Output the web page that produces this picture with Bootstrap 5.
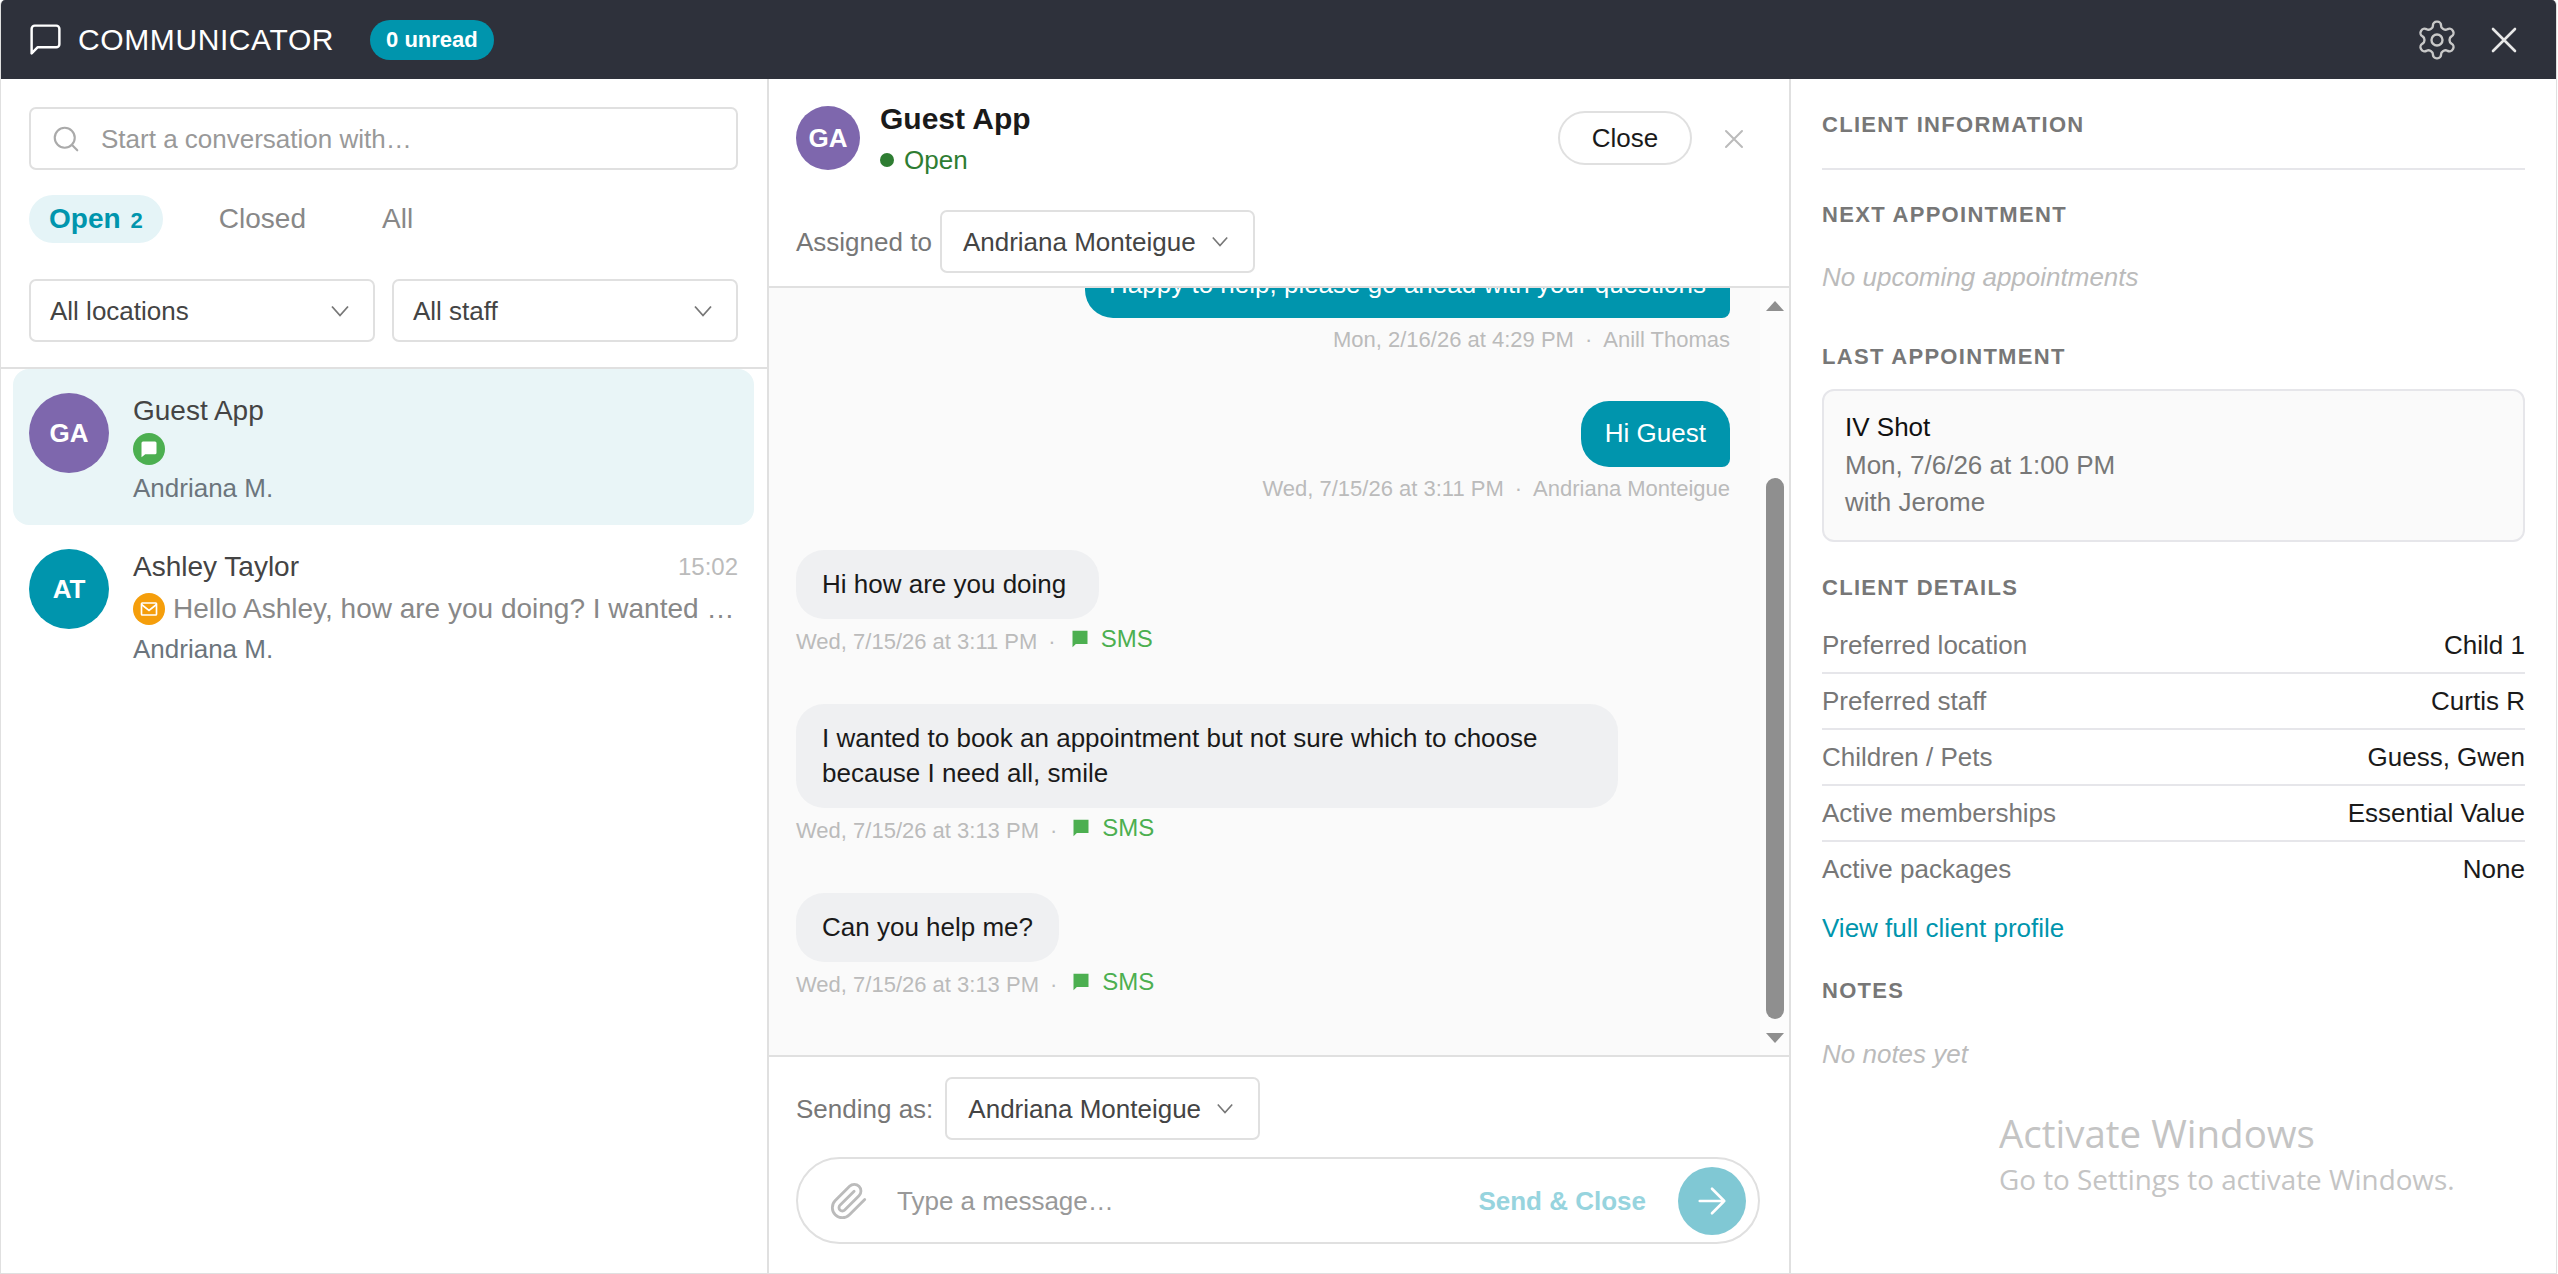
<!DOCTYPE html>
<html lang="en">
<head>
    <meta charset="UTF-8">
    <meta name="viewport" content="width=device-width, initial-scale=1.0">
    <title>Communicator</title>
    <link rel="stylesheet" href="https://cdn.jsdelivr.net/npm/bootstrap@5.3.0/dist/css/bootstrap.min.css">
    <style>
        html, body { height: 100%; }
        body {
            margin: 0;
            background: #fff;
            color: #1a1a1a;
            overflow: hidden;
            font-family: "Liberation Sans", Arial, sans-serif;
            font-size: 26px;
            line-height: 34px;
        }
        svg { display: block; flex-shrink: 0; }

        .shell {
            position: relative;
            width: 2557px;
            height: 1274px;
            border: solid #e0e0e0;
            border-width: 0 1px 1px 1px;
            border-radius: 5px 5px 0 0;
            overflow: hidden;
        }
        .top-bar { height: 79px; background: #2e313b; color: #fff; padding: 0 39px 0 26px; }
        .top-title { font-size: 30px; line-height: 40px; margin-left: 14px; letter-spacing: .6px; }
        .unread-pill {
            background: #0095ad; color: #fff; font-weight: 700; font-size: 22px; line-height: 40px;
            height: 40px; padding: 0 16px; border-radius: 20px; margin-left: 36px;
        }
        .top-actions { gap: 32px; }
        .panes { height: 1194px; }

        /* left pane */
        .left-pane { width: 768px; border-right: 2px solid #e0e0e0; flex-shrink: 0; }
        .left-head { padding: 28px 29px 25px 28px; border-bottom: 2px solid #e0e0e0; }
        .search-box {
            height: 63px; border: 2px solid #e0e0e0; border-radius: 7px; padding: 0 14px 0 20px; gap: 20px;
        }
        .search-box input, .composer input {
            border: 0; outline: 0; padding: 0; background: transparent; box-shadow: none;
            font-size: 26px; line-height: 34px; color: #333; border-radius: 0; min-width: 0;
        }
        .search-box input::placeholder { color: #999; opacity: 1; }
        .composer input::placeholder { color: #999; opacity: 1; }
        .conv-tabs { margin-top: 25px; gap: 56px; }
        .conv-tabs .nav-link {
            height: 48px; padding: 0; color: #888; font-size: 28px; line-height: 48px;
        }
        .conv-tabs .nav-link.active {
            background: #e5f4f7; color: #0095ad; font-weight: 700; border-radius: 24px; padding: 0 20px;
        }
        .conv-tabs .nav-item:last-child { margin-left: 20px; }
        .conv-tabs .tab-count { font-size: 22px; margin-left: 10px; }
        .pick-btn {
            height: 63px; border: 2px solid #e0e0e0; border-radius: 7px; background: #fff; color: #444;
            font-size: 26px; line-height: 34px; padding: 0 19px;
        }
        .filter-row { margin-top: 36px; gap: 17px; }
        .filter-row .pick-btn { flex: 1 1 0; }

        .conv-list { padding: 0 13px 0 12px; }
        .conv-row { border: 0 !important; padding: 24px 16px 20px; gap: 24px; background: transparent; color: inherit; border-radius: 16px !important; }
        .conv-row.picked { background: #e9f5f7; }
        .conv-row.next-row { height: 190px; }
        .face {
            border-radius: 50%; color: #fff; font-weight: 700; flex-shrink: 0;
        }
        .face-lg { width: 80px; height: 80px; font-size: 26px; }
        .face-md { width: 64px; height: 64px; font-size: 26px; margin-top: 5px; }
        .face-purple { background: #7e67ad; }
        .face-teal { background: #0095ad; }
        .conv-name { color: #444; font-size: 28px; line-height: 36px; }
        .conv-time { color: #bbb; font-size: 24px; line-height: 36px; }
        .conv-line { height: 40px; gap: 8px; color: #888; font-size: 28px; }
        .conv-staff { color: #6c757d; margin-top: 2px; }
        .next-row .conv-line { margin-top: 4px; }
        .next-row .conv-staff { margin-top: 3px; }
        .kind-dot { width: 32px; height: 32px; border-radius: 50%; flex-shrink: 0; }
        .kind-sms { background: #4caf50; }
        .kind-mail { background: #f59e0b; }

        /* middle pane */
        .mid-pane { width: 1022px; border-right: 2px solid #e0e0e0; flex-shrink: 0; }
        .mid-head { padding: 22px 45px 13px 27px; border-bottom: 2px solid #e0e0e0; }
        .mid-title { font-size: 30px; font-weight: 700; line-height: 36px; }
        .mid-status { color: #2e7d32; margin-top: 6px; gap: 10px; }
        .status-dot { width: 14px; height: 14px; border-radius: 50%; background: #2e7d32; }
        .close-chat {
            height: 54px; width: 134px; border: 2px solid #e0e0e0; border-radius: 27px; background: #fff;
            font-size: 26px; line-height: 34px; color: #1a1a1a; padding: 0; margin-top: 10px;
        }
        .assign-row { margin-top: 33px; gap: 8px; color: #777; }
        .assign-row .pick-btn { gap: 15px; padding: 0 24px 0 21px; }

        .chat-body { height: 767px; background: #fafafa; min-height: 0; }
        .chat-scroll { padding: 0 30px 55px 27px; overflow: hidden; }
        .bubble { padding: 17px 26px; line-height: 35px; border-radius: 28px; }
        .bubble-in { background: #eff0f2; color: #1a1a1a; max-width: 822px; align-self: flex-start; }
        .bubble-out {
            background: #0095ad; color: #fff; align-self: flex-end; padding: 15px 24px 16px;
            border-bottom-right-radius: 8px;
        }
        .stamp { font-size: 22px; line-height: 30px; color: #bbb; }
        .stamp-in { margin-top: 8px; margin-bottom: 47px; }
        .stamp-out { margin-top: 7px; margin-bottom: 46px; text-align: right; }
        .chat-scroll .stamp-in:last-child { margin-bottom: 0; }
        .stamp .sep { margin: 0 11px; }
        .sms-tag { color: #4caf50; font-size: 24px; gap: 11px; margin-left: 3px; position: relative; top: -3px; }
        .fake-scroll { width: 29px; background: #fcfcfc; padding: 13px 5px 12px 5px; flex-shrink: 0; }
        .fake-thumb { width: 18px; height: 541px; border-radius: 9px; background: #8f8f8f; margin-top: 167px; margin-bottom: 14px; }

        .mid-foot { border-top: 2px solid #e0e0e0; padding: 20px 29px 0 27px; }
        .send-row { gap: 12px; color: #777; }
        .send-row .pick-btn { gap: 15px; padding: 0 24px 0 21px; }
        .composer {
            height: 87px; margin-top: 17px; border: 2px solid #e0e0e0; border-radius: 44px;
            padding: 0 12px 0 31px; background: #fff;
        }
        .composer-input { margin-left: 28px; }
        .send-label { color: #97d4de; font-weight: 700; flex-shrink: 0; }
        .send-round { width: 68px; height: 68px; border-radius: 50%; background: #80c8d4; margin-left: 32px; flex-shrink: 0; }

        /* right pane */
        .info-pane { padding: 33px 31px 0 31px; min-width: 0; }
        .info-head { font-size: 22px; line-height: 26px; font-weight: 700; letter-spacing: 1.3px; color: #777; }
        .info-rule { border-bottom: 2px solid #e6e6ea; padding-bottom: 30px; }
        .info-empty { color: #bbb; font-style: italic; }
        .appt-box {
            margin-top: 19px; padding: 18px 21px; background: #fafafa; border: 2px solid #e6e6ea; border-radius: 12px;
            line-height: 37.5px; color: #777;
        }
        .appt-box .appt-name { color: #111; }
        .detail-row { height: 56px; border-bottom: 2px solid #e6e6ea; color: #777; }
        .detail-row:last-child { border-bottom: 0; height: 54px; }
        .detail-row span:last-child { color: #1a1a1a; }
        .profile-link { color: #0095ad; text-decoration: none; display: block; margin-top: 15px; }

        .activate-mark {
            position: absolute; left: 1998px; top: 1107px; color: #c4c4c4;
            font-family: "Open Sans", sans-serif; pointer-events: none;
        }
        .activate-mark .mark-a { font-size: 38.5px; line-height: 52px; }
        .activate-mark .mark-b { font-size: 27.8px; line-height: 36px; margin-top: 2px; }
    </style>
</head>
<body>

<div class="shell d-flex flex-column">
    <!-- top bar -->
    <div class="top-bar d-flex align-items-center">
        <svg width="37" height="37" viewBox="0 0 24 24" fill="none" stroke="#fff" stroke-width="1.6" stroke-linejoin="round"><path d="M21 15a2 2 0 0 1-2 2H7l-4 4V5a2 2 0 0 1 2-2h14a2 2 0 0 1 2 2z"/></svg>
        <div class="top-title">COMMUNICATOR</div>
        <div class="unread-pill">0 unread</div>
        <div class="top-actions ms-auto d-flex align-items-center">
            <svg width="44" height="44" viewBox="0 0 24 24" fill="none" stroke="#c8c8c8" stroke-width="1.3" stroke-linecap="round" stroke-linejoin="round"><path d="M12.22 2h-.44a2 2 0 0 0-2 2v.18a2 2 0 0 1-1 1.73l-.43.25a2 2 0 0 1-2 0l-.15-.08a2 2 0 0 0-2.73.73l-.22.38a2 2 0 0 0 .73 2.73l.15.1a2 2 0 0 1 1 1.72v.51a2 2 0 0 1-1 1.74l-.15.09a2 2 0 0 0-.73 2.73l.22.38a2 2 0 0 0 2.73.73l.15-.08a2 2 0 0 1 2 0l.43.25a2 2 0 0 1 1 1.73V20a2 2 0 0 0 2 2h.44a2 2 0 0 0 2-2v-.18a2 2 0 0 1 1-1.73l.43-.25a2 2 0 0 1 2 0l.15.08a2 2 0 0 0 2.73-.73l.22-.39a2 2 0 0 0-.73-2.73l-.15-.08a2 2 0 0 1-1-1.74v-.5a2 2 0 0 1 1-1.74l.15-.09a2 2 0 0 0 .73-2.73l-.22-.38a2 2 0 0 0-2.73-.73l-.15.08a2 2 0 0 1-2 0l-.43-.25a2 2 0 0 1-1-1.73V4a2 2 0 0 0-2-2z"/><circle cx="12" cy="12" r="3"/></svg>
            <svg width="26" height="26" viewBox="0 0 26 26" fill="none" stroke="#e8e8e8" stroke-width="2.6" stroke-linecap="round"><path d="M2 2l22 22M24 2L2 24"/></svg>
        </div>
    </div>

    <div class="panes d-flex">
        <!-- conversation list -->
        <div class="left-pane d-flex flex-column">
            <div class="left-head">
                <div class="search-box d-flex align-items-center">
                    <svg width="30" height="30" viewBox="0 0 24 24" fill="none" stroke="#aaa" stroke-width="1.7" stroke-linecap="round"><circle cx="11" cy="11" r="8"/><path d="M21 21l-4.35-4.35"/></svg>
                    <input class="form-control" type="text" placeholder="Start a conversation with…">
                </div>
                <ul class="nav conv-tabs">
                    <li class="nav-item"><a class="nav-link active" href="#">Open<span class="tab-count">2</span></a></li>
                    <li class="nav-item"><a class="nav-link" href="#">Closed</a></li>
                    <li class="nav-item"><a class="nav-link" href="#">All</a></li>
                </ul>
                <div class="filter-row d-flex">
                    <button class="btn pick-btn d-flex align-items-center justify-content-between">All locations
                        <svg class="me-1" width="20" height="12" viewBox="0 0 20 12" fill="none" stroke="#777" stroke-width="1.8"><path d="M2 1.5l8 9 8-9"/></svg></button>
                    <button class="btn pick-btn d-flex align-items-center justify-content-between">All staff
                        <svg class="me-1" width="20" height="12" viewBox="0 0 20 12" fill="none" stroke="#777" stroke-width="1.8"><path d="M2 1.5l8 9 8-9"/></svg></button>
                </div>
            </div>
            <div class="list-group conv-list">
                <a href="#" class="list-group-item conv-row picked d-flex text-decoration-none">
                    <div class="face face-lg face-purple d-flex align-items-center justify-content-center">GA</div>
                    <div class="flex-fill" style="min-width:0">
                        <div class="conv-name">Guest App</div>
                        <div class="conv-line d-flex align-items-center">
                            <div class="kind-dot kind-sms d-flex align-items-center justify-content-center">
                                <svg width="18" height="18" viewBox="0 0 24 24" fill="#fff"><path d="M2 4a2 2 0 0 1 2-2h16a2 2 0 0 1 2 2v13a2 2 0 0 1-2 2H7l-5 4z"/></svg>
                            </div>
                        </div>
                        <div class="conv-staff">Andriana M.</div>
                    </div>
                </a>
                <a href="#" class="list-group-item conv-row next-row d-flex text-decoration-none">
                    <div class="face face-lg face-teal d-flex align-items-center justify-content-center">AT</div>
                    <div class="flex-fill" style="min-width:0">
                        <div class="d-flex justify-content-between">
                            <div class="conv-name">Ashley Taylor</div>
                            <div class="conv-time">15:02</div>
                        </div>
                        <div class="conv-line d-flex align-items-center">
                            <div class="kind-dot kind-mail d-flex align-items-center justify-content-center">
                                <svg width="18" height="18" viewBox="0 0 24 24" fill="none" stroke="#fff" stroke-width="2.2"><rect x="2" y="4" width="20" height="16" rx="1"/><path d="M2 6l10 8 10-8"/></svg>
                            </div>
                            <div class="text-truncate">Hello Ashley, how are you doing? I wanted to ask about my booking</div>
                        </div>
                        <div class="conv-staff">Andriana M.</div>
                    </div>
                </a>
            </div>
        </div>

        <!-- chat -->
        <div class="mid-pane d-flex flex-column">
            <div class="mid-head">
                <div class="d-flex align-items-start">
                    <div class="face face-md face-purple d-flex align-items-center justify-content-center">GA</div>
                    <div style="margin-left:20px">
                        <div class="mid-title">Guest App</div>
                        <div class="mid-status d-flex align-items-center"><span class="status-dot"></span>Open</div>
                    </div>
                    <button class="btn close-chat ms-auto">Close</button>
                    <svg style="margin:28px 0 0 32px" width="20" height="20" viewBox="0 0 20 20" fill="none" stroke="#bbb" stroke-width="2" stroke-linecap="round"><path d="M2 2l16 16M18 2L2 18"/></svg>
                </div>
                <div class="assign-row d-flex align-items-center">
                    <span>Assigned to</span>
                    <button class="btn pick-btn d-flex align-items-center">Andriana Monteigue
                        <svg width="18" height="11" viewBox="0 0 20 12" fill="none" stroke="#777" stroke-width="1.8"><path d="M2 1.5l8 9 8-9"/></svg></button>
                </div>
            </div>

            <div class="chat-body d-flex">
                <div class="chat-scroll flex-fill d-flex flex-column justify-content-end" style="min-width:0">
                    <div class="bubble bubble-out">Happy to help, please go ahead with your questions</div>
                    <div class="stamp stamp-out">Mon, 2/16/26 at 4:29 PM<span class="sep">·</span>Anill Thomas</div>

                    <div class="bubble bubble-out">Hi Guest</div>
                    <div class="stamp stamp-out">Wed, 7/15/26 at 3:11 PM<span class="sep">·</span>Andriana Monteigue</div>

                    <div class="bubble bubble-in">Hi how are you doing&nbsp;</div>
                    <div class="stamp stamp-in d-flex align-items-center">Wed, 7/15/26 at 3:11 PM<span class="sep">·</span>
                        <span class="sms-tag d-inline-flex align-items-center"><svg width="20" height="20" viewBox="0 0 24 24" fill="#4caf50"><path d="M3 2h18v16H7l-4 4z"/></svg>SMS</span></div>

                    <div class="bubble bubble-in">I wanted to book an appointment but not sure which to choose because I need all, smile</div>
                    <div class="stamp stamp-in d-flex align-items-center">Wed, 7/15/26 at 3:13 PM<span class="sep">·</span>
                        <span class="sms-tag d-inline-flex align-items-center"><svg width="20" height="20" viewBox="0 0 24 24" fill="#4caf50"><path d="M3 2h18v16H7l-4 4z"/></svg>SMS</span></div>

                    <div class="bubble bubble-in">Can you help me?</div>
                    <div class="stamp stamp-in d-flex align-items-center">Wed, 7/15/26 at 3:13 PM<span class="sep">·</span>
                        <span class="sms-tag d-inline-flex align-items-center"><svg width="20" height="20" viewBox="0 0 24 24" fill="#4caf50"><path d="M3 2h18v16H7l-4 4z"/></svg>SMS</span></div>
                </div>
                <div class="fake-scroll d-flex flex-column align-items-center">
                    <svg width="18" height="10" viewBox="0 0 18 10" fill="#8f8f8f"><path d="M9 0l9 10H0z"/></svg>
                    <div class="fake-thumb"></div>
                    <svg width="18" height="10" viewBox="0 0 18 10" fill="#8f8f8f"><path d="M9 10L0 0h18z"/></svg>
                </div>
            </div>

            <div class="mid-foot flex-fill">
                <div class="send-row d-flex align-items-center">
                    <span>Sending as:</span>
                    <button class="btn pick-btn d-flex align-items-center">Andriana Monteigue
                        <svg width="18" height="11" viewBox="0 0 20 12" fill="none" stroke="#777" stroke-width="1.8"><path d="M2 1.5l8 9 8-9"/></svg></button>
                </div>
                <div class="composer d-flex align-items-center">
                    <svg width="40" height="40" viewBox="0 0 24 24" fill="none" stroke="#bbb" stroke-width="1.7" stroke-linecap="round" stroke-linejoin="round"><path d="M21.44 11.05l-9.19 9.19a6 6 0 0 1-8.49-8.49l8.57-8.57A4 4 0 1 1 18 8.84l-8.59 8.57a2 2 0 0 1-2.83-2.83l8.49-8.48"/></svg>
                    <input class="form-control flex-fill composer-input" type="text" placeholder="Type a message…">
                    <span class="send-label text-nowrap">Send &amp; Close</span>
                    <div class="send-round d-flex align-items-center justify-content-center">
                        <svg width="42" height="42" viewBox="0 0 24 24" fill="none" stroke="#fff" stroke-width="1.5" stroke-linecap="round" stroke-linejoin="round"><path d="M5 12h14M12 5l7 7-7 7"/></svg>
                    </div>
                </div>
            </div>
        </div>

        <!-- client info -->
        <div class="info-pane flex-fill">
            <div class="info-rule"><div class="info-head">CLIENT INFORMATION</div></div>
            <div class="info-head" style="margin-top:32px">NEXT APPOINTMENT</div>
            <div class="info-empty" style="margin-top:32px">No upcoming appointments</div>
            <div class="info-head" style="margin-top:50px">LAST APPOINTMENT</div>
            <div class="appt-box">
                <div class="appt-name">IV Shot</div>
                <div>Mon, 7/6/26 at 1:00 PM</div>
                <div>with Jerome</div>
            </div>
            <div class="info-head" style="margin-top:33px;margin-bottom:17px">CLIENT DETAILS</div>
            <div>
                <div class="detail-row d-flex align-items-center justify-content-between"><span>Preferred location</span><span>Child 1</span></div>
                <div class="detail-row d-flex align-items-center justify-content-between"><span>Preferred staff</span><span>Curtis R</span></div>
                <div class="detail-row d-flex align-items-center justify-content-between"><span>Children / Pets</span><span>Guess, Gwen</span></div>
                <div class="detail-row d-flex align-items-center justify-content-between"><span>Active memberships</span><span>Essential Value</span></div>
                <div class="detail-row d-flex align-items-center justify-content-between"><span>Active packages</span><span>None</span></div>
            </div>
            <a class="profile-link" href="#">View full client profile</a>
            <div class="info-head" style="margin-top:33px">NOTES</div>
            <div class="info-empty" style="margin-top:33px">No notes yet</div>
        </div>
    </div>

    <div class="activate-mark">
        <div class="mark-a">Activate Windows</div>
        <div class="mark-b">Go to Settings to activate Windows.</div>
    </div>
</div>

<script src="https://cdn.jsdelivr.net/npm/bootstrap@5.3.0/dist/js/bootstrap.bundle.min.js"></script>
</body>
</html>
